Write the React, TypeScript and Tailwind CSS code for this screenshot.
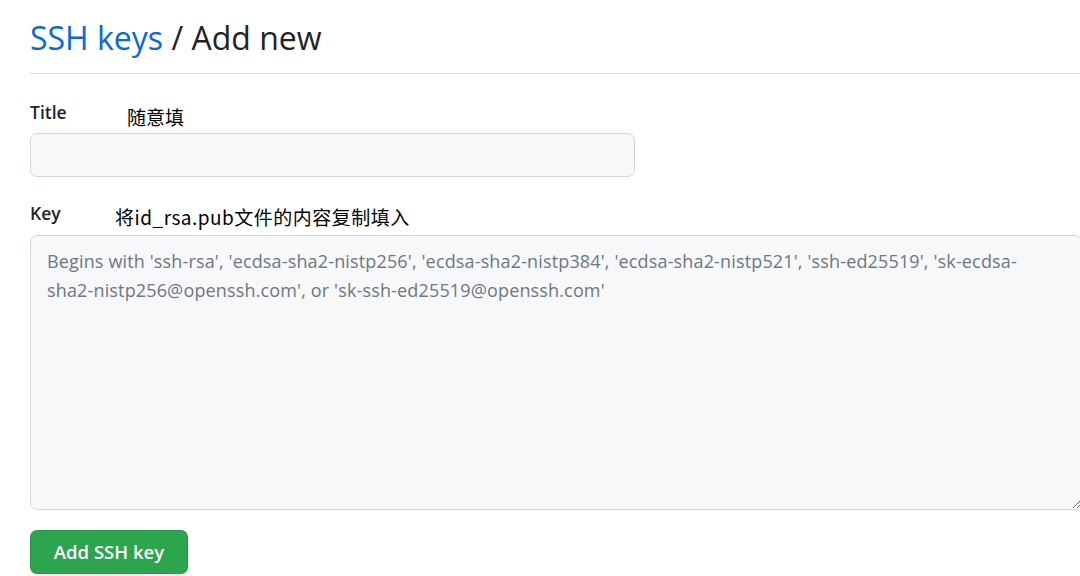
const placeholder =
    "Begins with 'ssh-rsa', 'ecdsa-sha2-nistp256', 'ecdsa-sha2-nistp384', 'ecdsa-sha2-nistp521', 'ssh-ed25519', 'sk-ecdsa-sha2-nistp256@openssh.com', or 'sk-ssh-ed25519@openssh.com'";

const App = () => {
    return (
        <div className="h-[576px] w-[1080px] overflow-hidden bg-white font-['Open_Sans','Noto_Sans_CJK_SC',sans-serif] text-[#1f2328]">
            <div className="w-[1100px] pl-[30px]">
                {/* Header */}
                <div className="border-b border-[#d8dee4] pt-[17px] pb-[14px]">
                    <h1 className="text-[32px] leading-[42px] font-normal">
                        <span className="text-[#0969da]">SSH keys</span> / Add new
                    </h1>
                </div>

                <form className="w-[1052px]">
                    {/* Title */}
                    <div className="mt-[26px] flex items-end">
                        <label className="w-[97px] text-[17.5px] leading-6 font-semibold">
                            Title
                        </label>
                        <span className="translate-y-[5px] font-['Noto_Sans_CJK_SC',sans-serif] text-[19px] leading-6 text-black">
                            随意填
                        </span>
                    </div>
                    <input
                        type="text"
                        className="mt-[9px] block h-[44px] w-[605px] rounded-[7px] border border-[#d0d7de] bg-[#f6f8fa] px-4 text-[17px] outline-none"
                    />

                    {/* Key */}
                    <div className="mt-[24px] flex items-end">
                        <label className="w-[85px] text-[17.5px] leading-6 font-semibold">
                            Key
                        </label>
                        <span className="translate-y-[4px] font-['Noto_Sans_CJK_SC',sans-serif] text-[19px] leading-6 tracking-[0.5px] text-black">
                            将id_rsa.pub文件的内容复制填入
                        </span>
                    </div>
                    <textarea
                        placeholder={placeholder}
                        className="mt-[10px] block h-[275px] w-[1052px] resize-y rounded-[7px] border border-[#d0d7de] bg-[#f6f8fa] py-[11px] pr-8 pl-4 text-[18px] leading-[29px] tracking-[0.15px] outline-none placeholder:text-[#6e7781]"
                    />

                    <button
                        type="button"
                        className="mt-[20px] h-[44px] w-[158px] rounded-[7px] border border-[#1f883d]/40 bg-[#2da44e] text-[18.5px] font-semibold text-white"
                    >
                        Add SSH key
                    </button>
                </form>
            </div>
        </div>
    );
};

export default App;
